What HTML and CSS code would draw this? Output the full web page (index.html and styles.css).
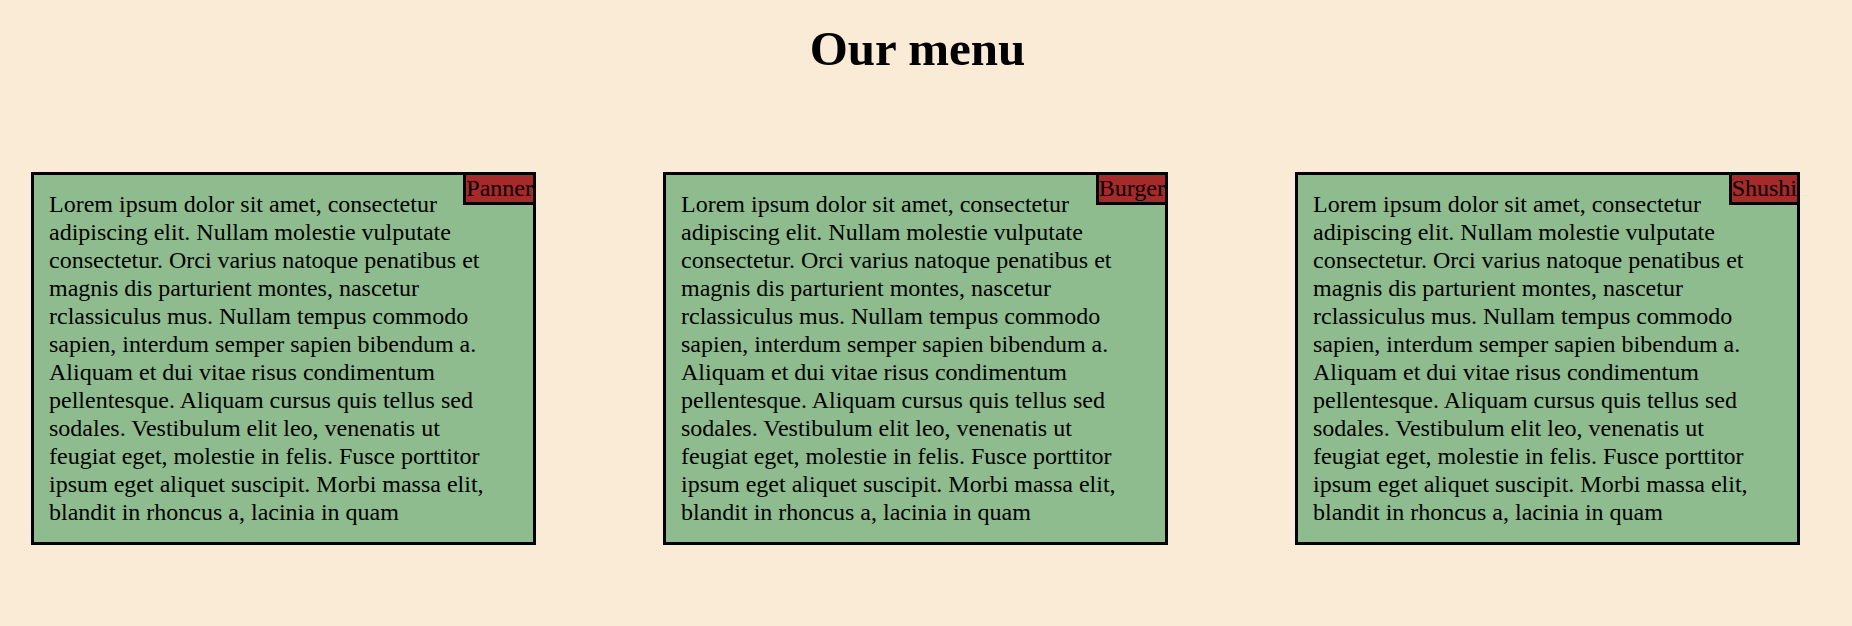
FILE: index.html
```html
<!DOCTYPE html>
<html lang="en">
<head>
<meta charset="utf-8">
<title>Our menu</title>
<link rel="stylesheet" href="styles.css">
</head>
<body>
<h1 class="title">Our menu</h1>
<div class="menu">
  <div class="card">
    <span class="tag">Panner</span>
    <p class="desc">Lorem ipsum dolor sit amet, consectetur adipiscing elit. Nullam molestie vulputate consectetur. Orci varius natoque penatibus et magnis dis parturient montes, nascetur rclassiculus mus. Nullam tempus commodo sapien, interdum semper sapien bibendum a. Aliquam et dui vitae risus condimentum pellentesque. Aliquam cursus quis tellus sed sodales. Vestibulum elit leo, venenatis ut feugiat eget, molestie in felis. Fusce porttitor ipsum eget aliquet suscipit. Morbi massa elit, blandit in rhoncus a, lacinia in quam</p>
  </div>
  <div class="card">
    <span class="tag">Burger</span>
    <p class="desc">Lorem ipsum dolor sit amet, consectetur adipiscing elit. Nullam molestie vulputate consectetur. Orci varius natoque penatibus et magnis dis parturient montes, nascetur rclassiculus mus. Nullam tempus commodo sapien, interdum semper sapien bibendum a. Aliquam et dui vitae risus condimentum pellentesque. Aliquam cursus quis tellus sed sodales. Vestibulum elit leo, venenatis ut feugiat eget, molestie in felis. Fusce porttitor ipsum eget aliquet suscipit. Morbi massa elit, blandit in rhoncus a, lacinia in quam</p>
  </div>
  <div class="card">
    <span class="tag">Shushi</span>
    <p class="desc">Lorem ipsum dolor sit amet, consectetur adipiscing elit. Nullam molestie vulputate consectetur. Orci varius natoque penatibus et magnis dis parturient montes, nascetur rclassiculus mus. Nullam tempus commodo sapien, interdum semper sapien bibendum a. Aliquam et dui vitae risus condimentum pellentesque. Aliquam cursus quis tellus sed sodales. Vestibulum elit leo, venenatis ut feugiat eget, molestie in felis. Fusce porttitor ipsum eget aliquet suscipit. Morbi massa elit, blandit in rhoncus a, lacinia in quam</p>
  </div>
</div>
</body>
</html>
```

FILE: styles.css
```css
html {
  background: #faebd7;
}

body {
  margin: 8px;
  background: #faebd7;
  font-family: "Liberation Serif", "Times New Roman", serif;
  color: #000;
}

.title {
  margin: 12px 0 95px 0;
  padding-right: 17px;
  text-align: center;
  font-size: 49px;
  font-weight: bold;
  line-height: normal;
}

.menu {
  display: flex;
  align-items: flex-start;
  gap: 127px;
  padding-left: 23px;
}

.card {
  position: relative;
  box-sizing: border-box;
  width: 505px;
  flex: none;
  padding: 15px 25px 16px 15px;
  background: #8fbc8f;
  border: 3px solid #000;
}

.desc {
  margin: 0;
  font-size: 24px;
  line-height: 28px;
}

.tag {
  position: absolute;
  top: -3px;
  right: -3px;
  background: #a52a2a;
  border: 3px solid #000;
  font-size: 24px;
  line-height: normal;
}
```
